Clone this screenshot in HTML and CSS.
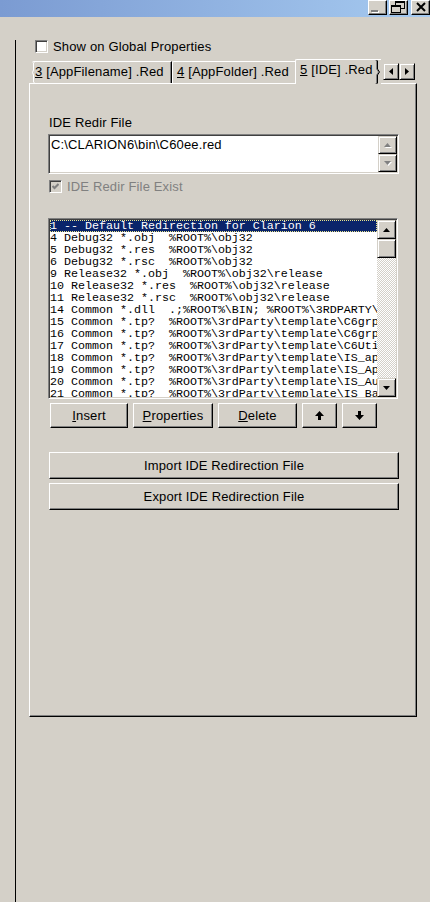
FILE: index.html
```html
<!DOCTYPE html>
<html lang="en">
<head>
  <meta charset="UTF-8">
  <meta name="viewport" content="width=device-width, initial-scale=1.0">
  <title>IDE Redirection</title>
  <link rel="stylesheet" href="styles.css">
</head>
<body>
  <div class="window">
    <!-- title bar (only the right end is visible) -->
    <div class="titlebar">
      <div class="cap-btns">
        <span class="cap-btn">
          <svg width="17" height="13" viewBox="0 0 17 13">
            <rect x="3" y="10" width="7" height="2" fill="#fff"/>
            <rect x="2" y="9" width="7" height="2" fill="#808080"/>
          </svg>
        </span>
        <span class="cap-btn">
          <svg width="17" height="13" viewBox="0 0 17 13">
            <rect x="5" y="0" width="10" height="2" fill="#000"/>
            <rect x="5.5" y="0.5" width="9" height="7" fill="none" stroke="#000"/>
            <rect x="1.5" y="4.5" width="9" height="7" fill="#d4d0c8" stroke="#000"/>
            <rect x="1" y="4" width="10" height="2" fill="#000"/>
          </svg>
        </span>
        <span class="cap-btn close">
          <svg width="17" height="13" viewBox="0 0 17 13">
            <path d="M5 2 L13 10 M13 2 L5 10" stroke="#000" stroke-width="2"/>
          </svg>
        </span>
      </div>
    </div>

    <div class="client">
      <div class="frame">
        <div class="check-row global">
          <span class="checkbox"></span>Show on Global Properties
        </div>

        <div class="tabstrip">
          <div class="tab tab-first">
            <svg class="torn-left" width="4" height="23" viewBox="0 0 4 23">
              <polyline points="3.5,0 1.5,2 1.5,9 0.5,11.5 1.5,14 1.5,21 3.5,23" fill="none" stroke="#fff"/>
            </svg>
            <u>3</u> [AppFilename] .Red
          </div>
          <div class="tab tab-second"><u>4</u> [AppFolder] .Red</div>
          <div class="tab active">
            <u>5</u> [IDE] .Red
            <svg class="torn-right" width="7" height="26" viewBox="0 0 7 26">
              <polygon points="1,0 7,0 7,26 1,26 3,24 3,16 5,13 3,10 3,2" fill="#d4d0c8"/>
              <polyline points="0.5,0 2.5,2 2.5,10 4.5,13 2.5,16 2.5,24 0.5,26" fill="none" stroke="#808080"/>
              <polyline points="1.5,0 3.5,2 3.5,10 5.5,13 3.5,16 3.5,24 1.5,26" fill="none" stroke="#000"/>
            </svg>
          </div>
          <div class="tab-scroll">
            <span class="sb-btn">
              <svg width="4" height="7" viewBox="0 0 4 7"><polygon points="4,0 4,7 0,3.5" fill="#000"/></svg>
            </span>
            <span class="sb-btn">
              <svg width="4" height="7" viewBox="0 0 4 7"><polygon points="0,0 0,7 4,3.5" fill="#000"/></svg>
            </span>
          </div>
        </div>

        <div class="panel">
          <div class="field-label">IDE Redir File</div>
          <div class="textbox">
            <div class="textbox-text">C:\CLARION6\bin\C60ee.red</div>
            <div class="vscroll">
              <span class="sb-btn">
                <svg width="8" height="5" viewBox="0 0 8 5">
                  <polygon points="1,5 4.5,1 8,5" fill="#fff"/>
                  <polygon points="0,4 3.5,0 7,4" fill="#808080"/>
                </svg>
              </span>
              <span class="sb-btn">
                <svg width="8" height="5" viewBox="0 0 8 5">
                  <polygon points="1,1 8,1 4.5,5" fill="#fff"/>
                  <polygon points="0,0 7,0 3.5,4" fill="#808080"/>
                </svg>
              </span>
            </div>
          </div>

          <div class="check-row disabled">
            <span class="checkbox checked">
              <svg width="7" height="7" viewBox="0 0 7 7">
                <polyline points="0.5,3 2.5,5 6.5,1" fill="none" stroke="#808080" stroke-width="2"/>
              </svg>
            </span>IDE Redir File Exist
          </div>

          <div class="listbox">
            <div class="list-items">
              <div class="row selected">1 -- Default Redirection for Clarion 6</div>
              <div class="row">4 Debug32 *.obj  %ROOT%\obj32</div>
              <div class="row">5 Debug32 *.res  %ROOT%\obj32</div>
              <div class="row">6 Debug32 *.rsc  %ROOT%\obj32</div>
              <div class="row">9 Release32 *.obj  %ROOT%\obj32\release</div>
              <div class="row">10 Release32 *.res  %ROOT%\obj32\release</div>
              <div class="row">11 Release32 *.rsc  %ROOT%\obj32\release</div>
              <div class="row">14 Common *.dll  .;%ROOT%\BIN; %ROOT%\3RDPARTY\BIN</div>
              <div class="row">15 Common *.tp?  %ROOT%\3rdParty\template\C6grpCOM</div>
              <div class="row">16 Common *.tp?  %ROOT%\3rdParty\template\C6grpUtil</div>
              <div class="row">17 Common *.tp?  %ROOT%\3rdParty\template\C6Utils</div>
              <div class="row">18 Common *.tp?  %ROOT%\3rdParty\template\IS_appgen</div>
              <div class="row">19 Common *.tp?  %ROOT%\3rdParty\template\IS_AppGen</div>
              <div class="row">20 Common *.tp?  %ROOT%\3rdParty\template\IS_Audit</div>
              <div class="row">21 Common *.tp?  %ROOT%\3rdParty\template\IS_Base</div>
            </div>
            <div class="vscroll">
              <span class="sb-btn tall">
                <svg width="7" height="4" viewBox="0 0 7 4"><polygon points="0,4 3.5,0 7,4" fill="#000"/></svg>
              </span>
              <span class="sb-thumb"></span>
              <span class="sb-track"></span>
              <span class="sb-btn tall">
                <svg width="7" height="4" viewBox="0 0 7 4"><polygon points="0,0 7,0 3.5,4" fill="#000"/></svg>
              </span>
            </div>
          </div>

          <div class="btn-row">
            <button class="btn btn-insert"><u>I</u>nsert</button>
            <button class="btn btn-props"><u>P</u>roperties</button>
            <button class="btn btn-delete"><u>D</u>elete</button>
            <button class="btn btn-arrow">
              <svg width="9" height="9" viewBox="0 0 9 9"><polygon points="4.5,0 9,5 6,5 6,9 3,9 3,5 0,5" fill="#000"/></svg>
            </button>
            <button class="btn btn-arrow">
              <svg width="9" height="9" viewBox="0 0 9 9"><polygon points="3,0 6,0 6,4 9,4 4.5,9 0,4 3,4" fill="#000"/></svg>
            </button>
          </div>

          <button class="btn wide import">Import IDE Redirection File</button>
          <button class="btn wide export">Export IDE Redirection File</button>
        </div>
      </div>
    </div>
  </div>
</body>
</html>
```

FILE: styles.css
```css
* {
  box-sizing: border-box;
}
body {
  margin: 0;
  background: #d4d0c8;
  font-family: "Liberation Sans", Arial, sans-serif;
  font-size: 13px;
  letter-spacing: 0.15px;
  color: #000;
  overflow: hidden;
}
.window {
  width: 430px;
  height: 902px;
  display: flex;
  flex-direction: column;
}

/* title bar */
.titlebar {
  height: 17px;
  flex: none;
  background: linear-gradient(to right, #7b9bd2, #a6caf0);
  display: flex;
  justify-content: flex-end;
}
.cap-btns {
  display: flex;
}
.cap-btn {
  width: 19px;
  height: 15px;
  background: #d4d0c8;
  border: 1px solid;
  border-color: #fff #000 #000 #fff;
  box-shadow: inset -1px -1px #808080;
  display: flex;
}
.cap-btn + .cap-btn {
  margin-left: 2px;
}
.cap-btn.close {
  margin-left: 3px;
}
.cap-btn svg {
  display: block;
}

/* client area with the left rule */
.client {
  flex: 1;
  padding: 23px 0 0 15px;
}
.frame {
  height: 100%;
  border-left: 1px solid #000;
  padding-left: 13px;
}

/* checkboxes */
.check-row {
  display: flex;
  align-items: center;
  height: 13px;
  line-height: 13px;
  white-space: nowrap;
}
.global {
  margin-left: 6px;
}
.checkbox {
  width: 13px;
  height: 13px;
  flex: none;
  margin-right: 5px;
  background: #fff;
  border: 1px solid;
  border-color: #808080 #fff #fff #808080;
  box-shadow: inset 1px 1px #404040, inset -1px -1px #d4d0c8;
  display: flex;
  align-items: center;
  justify-content: center;
}
.check-row.disabled {
  color: #808080;
  margin: 6px 0 0 1px;
}
.checkbox.checked {
  background: #d4d0c8;
}

/* tabs */
.tabstrip {
  position: relative;
  z-index: 1;
  display: flex;
  align-items: flex-end;
  width: 383px;
  height: 24px;
  margin: 6px 0 0 3px;
}
.tab {
  position: relative;
  flex: none;
  height: 22px;
  padding: 2px 0 0 4px;
  border-top: 1px solid #fff;
  border-left: 1px solid #fff;
  border-top-left-radius: 2px;
  line-height: 15px;
  white-space: nowrap;
  overflow: hidden;
}
.tab-first {
  width: 140px;
  border-left: 0;
  padding-left: 3px;
  border-right: 1px solid #000;
  box-shadow: inset -1px 0 #808080;
}
.tab-second {
  width: 125px;
}
.tab.active {
  width: 86px;
  height: 25px;
  margin-left: -2px;
  margin-bottom: -1px;
  background: #d4d0c8;
}
.torn-left {
  position: absolute;
  left: 0;
  top: -1px;
}
.torn-right {
  position: absolute;
  right: 0;
  top: -1px;
}
.tab-scroll {
  display: flex;
  margin-left: auto;
  align-self: flex-start;
  margin-top: 4px;
}
.tab-scroll .sb-btn {
  width: 16px;
  height: 17px;
}

/* raised scroll buttons */
.sb-btn,
.sb-thumb {
  background: #d4d0c8;
  border: 1px solid;
  border-color: #d4d0c8 #000 #000 #d4d0c8;
  box-shadow: inset 1px 1px #fff, inset -1px -1px #808080;
  display: flex;
  align-items: center;
  justify-content: center;
  flex: none;
}
.sb-btn svg {
  display: block;
}

/* tab page */
.panel {
  width: 388px;
  height: 634px;
  border: 1px solid;
  border-color: #fff #000 #000 #fff;
  box-shadow: inset -1px -1px #808080;
  padding: 31px 0 0 18px;
}
.field-label {
  line-height: 15px;
  margin-left: 1px;
}
.textbox,
.listbox {
  display: flex;
  background: #fff;
  border: 1px solid;
  border-color: #808080 #fff #fff #808080;
  box-shadow: inset 1px 1px #404040, inset -1px -1px #d4d0c8;
  padding: 1px;
}
.textbox {
  width: 351px;
  height: 40px;
  margin-top: 4px;
}
.textbox-text {
  flex: 1;
  padding: 1px 0 0 1px;
  line-height: 15px;
}
.vscroll {
  width: 19px;
  flex: none;
  display: flex;
  flex-direction: column;
}
.textbox .sb-btn {
  height: 18px;
}

/* list */
.listbox {
  width: 350px;
  height: 181px;
  margin-top: 25px;
}
.list-items {
  flex: 1;
  min-width: 0;
  overflow: hidden;
  font-family: "Liberation Mono", "Courier New", monospace;
  font-size: 11.67px;
  letter-spacing: 0;
  line-height: 12px;
}
.row {
  height: 12px;
  white-space: pre;
}
.row.selected {
  background: #0a246a;
  color: #fff;
  outline: 1px dotted #e8e48c;
  outline-offset: -1px;
}
.sb-btn.tall,
.sb-thumb {
  height: 19px;
}
.sb-track {
  flex: 1;
  background-color: #d4d0c8;
  background-image: conic-gradient(#fff 25%, #d4d0c8 0 50%, #fff 0 75%, #d4d0c8 0);
  background-size: 2px 2px;
}

/* push buttons */
.btn {
  font: inherit;
  letter-spacing: inherit;
  color: #000;
  height: 25px;
  padding: 0;
  background: #d4d0c8;
  border: 1px solid;
  border-color: #fff #000 #000 #fff;
  box-shadow: inset -1px -1px #808080;
  display: flex;
  align-items: center;
  justify-content: center;
}
.btn-row {
  display: flex;
  gap: 5px;
  margin: 4px 0 0 2px;
}
.btn-insert {
  width: 78px;
}
.btn-props {
  width: 80px;
}
.btn-delete {
  width: 79px;
}
.btn-arrow {
  width: 35px;
}
.wide {
  width: 350px;
  height: 27px;
  margin-left: 1px;
}
.import {
  margin-top: 24px;
}
.export {
  margin-top: 4px;
}
```
